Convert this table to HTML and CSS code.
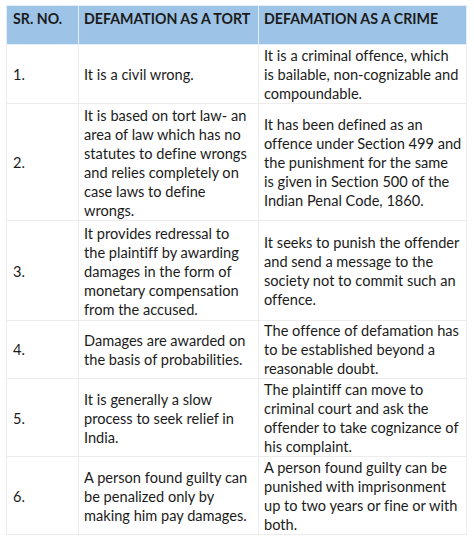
FILE: index.html
```html
<!DOCTYPE html>
<html>
<head>
<meta charset="utf-8">
<link rel="stylesheet" href="styles.css">
</head>
<body>
<table class="cmp">
  <colgroup>
    <col class="c1"><col class="c2"><col class="c3">
  </colgroup>
  <thead>
    <tr class="head">
      <th>SR. NO.</th>
      <th>DEFAMATION AS A TORT</th>
      <th>DEFAMATION AS A CRIME</th>
    </tr>
  </thead>
  <tbody>
    <tr class="r1">
      <td>1.</td>
      <td>It is a civil wrong.</td>
      <td>It is a criminal offence, which<br>is bailable, non-cognizable and<br>compoundable.</td>
    </tr>
    <tr class="r2">
      <td>2.</td>
      <td>It is based on tort law- an<br>area of law which has no<br>statutes to define wrongs<br>and relies completely on<br>case laws to define<br>wrongs.</td>
      <td>It has been defined as an<br>offence under Section 499 and<br>the punishment for the same<br>is given in Section 500 of the<br>Indian Penal Code, 1860.</td>
    </tr>
    <tr class="r3">
      <td>3.</td>
      <td>It provides redressal to<br>the plaintiff by awarding<br>damages in the form of<br>monetary compensation<br>from the accused.</td>
      <td>It seeks to punish the offender<br>and send a message to the<br>society not to commit such an<br>offence.</td>
    </tr>
    <tr class="r4">
      <td>4.</td>
      <td>Damages are awarded on<br>the basis of probabilities.</td>
      <td>The offence of defamation has<br>to be established beyond a<br>reasonable doubt.</td>
    </tr>
    <tr class="r5">
      <td>5.</td>
      <td>It is generally a slow<br>process to seek relief in<br>India.</td>
      <td>The plaintiff can move to<br>criminal court and ask the<br>offender to take cognizance of<br>his complaint.</td>
    </tr>
    <tr class="r6">
      <td>6.</td>
      <td>A person found guilty can<br>be penalized only by<br>making him pay damages.</td>
      <td>A person found guilty can be<br>punished with imprisonment<br>up to two years or fine or with<br>both.</td>
    </tr>
  </tbody>
</table>
</body>
</html>
```
FILE: styles.css
```css
html, body {
  margin: 0;
  padding: 0;
  background: #ffffff;
}
body {
  padding: 5px 0 0 6px;
}
.cmp {
  border-collapse: collapse;
  table-layout: fixed;
  width: 460px;
  font-family: Lato, "Open Sans", sans-serif;
  font-size: 14.6px;
  line-height: 19px;
  color: #1b1b1b;
  font-variant-ligatures: none;
}
.c1 { width: 72px; }
.c2 { width: 180px; }
.c3 { width: 208px; }
.cmp th, .cmp td {
  border: 1px solid #ececec;
  padding: 1px 2px 0 5px;
  text-align: left;
  white-space: nowrap;
}
.cmp td:first-child, .cmp th:first-child {
  padding-left: 6px;
}
.head th {
  background: #9dc3e6;
  border-color: #e4eef8;
  font-weight: 700;
  font-size: 14.2px;
  vertical-align: top;
  height: 39px;
  padding-top: 3px;
  box-sizing: border-box;
}
.cmp td {
  vertical-align: middle;
  box-sizing: border-box;
}
.r1 td { height: 58px; }
.r2 td { height: 117px; }
.r3 td { height: 100px; }
.r4 td { height: 56px; padding-top: 0; }
.r5 td { height: 78px; }
.r6 td { height: 76px; }
```
